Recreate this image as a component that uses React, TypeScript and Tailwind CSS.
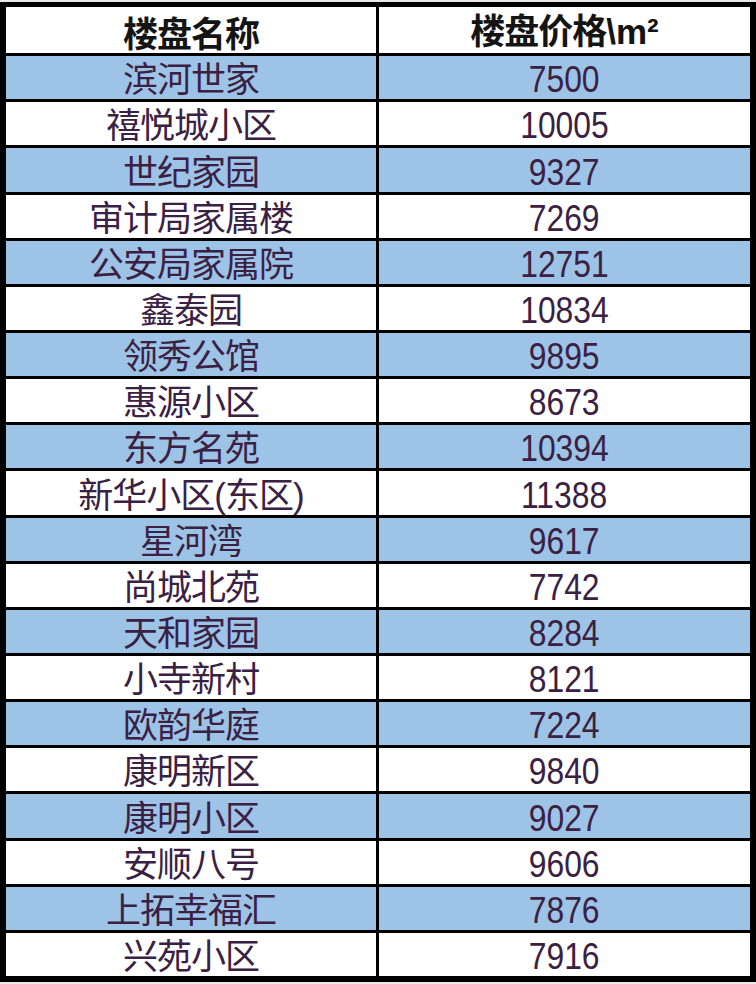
import React from "react";

const rows: [string, string][] = [
  ["滨河世家", "7500"],
  ["禧悦城小区", "10005"],
  ["世纪家园", "9327"],
  ["审计局家属楼", "7269"],
  ["公安局家属院", "12751"],
  ["鑫泰园", "10834"],
  ["领秀公馆", "9895"],
  ["惠源小区", "8673"],
  ["东方名苑", "10394"],
  ["新华小区(东区)", "11388"],
  ["星河湾", "9617"],
  ["尚城北苑", "7742"],
  ["天和家园", "8284"],
  ["小寺新村", "8121"],
  ["欧韵华庭", "7224"],
  ["康明新区", "9840"],
  ["康明小区", "9027"],
  ["安顺八号", "9606"],
  ["上拓幸福汇", "7876"],
  ["兴苑小区", "7916"],
];

export default function App() {
  return (
    <div className="w-[756px] h-[984px] bg-[#e9e9e9] pt-[2px]">
      <div className="w-[756px] h-[980px] bg-white border-black border-l-[6px] border-r-[6px] border-t-[5px] border-b-[6px]">
        <div className="grid grid-cols-[370px_1fr] grid-rows-[repeat(21,minmax(0,1fr))] h-[969px] text-[#3a2143]">
          <div className="flex items-center justify-center bg-white text-[35px] font-bold text-[#141414] tracking-[-1px] leading-none pt-[2px] font-['Noto_Sans_CJK_SC',sans-serif]">
            楼盘名称
          </div>
          <div className="flex items-center justify-center bg-white border-l-[3px] border-black text-[35px] font-bold text-[#141414] leading-none pt-[2px] font-['Liberation_Sans','Noto_Sans_CJK_SC',sans-serif]">
            <span className="tracking-[-1px]">楼盘价格</span>
            <span>\m²</span>
          </div>
          {rows.map(([name, price], i) => {
            const blue = i % 2 === 0;
            const bg = blue ? "bg-[#9dc3e6]" : "bg-white";
            return (
              <React.Fragment key={name}>
                <div
                  className={`flex items-center justify-center border-t-[3px] border-black text-[35px] tracking-[-1px] leading-[40px] pt-[5px] font-['Liberation_Sans','Noto_Sans_CJK_SC',sans-serif] ${bg}`}
                >
                  {name}
                </div>
                <div
                  className={`flex items-center justify-center border-t-[3px] border-l-[3px] border-black text-[37px] leading-[40px] pt-[5px] font-['Liberation_Sans',sans-serif] ${bg}`}
                >
                  <span className="inline-block scale-x-[0.86]">{price}</span>
                </div>
              </React.Fragment>
            );
          })}
        </div>
      </div>
    </div>
  );
}
